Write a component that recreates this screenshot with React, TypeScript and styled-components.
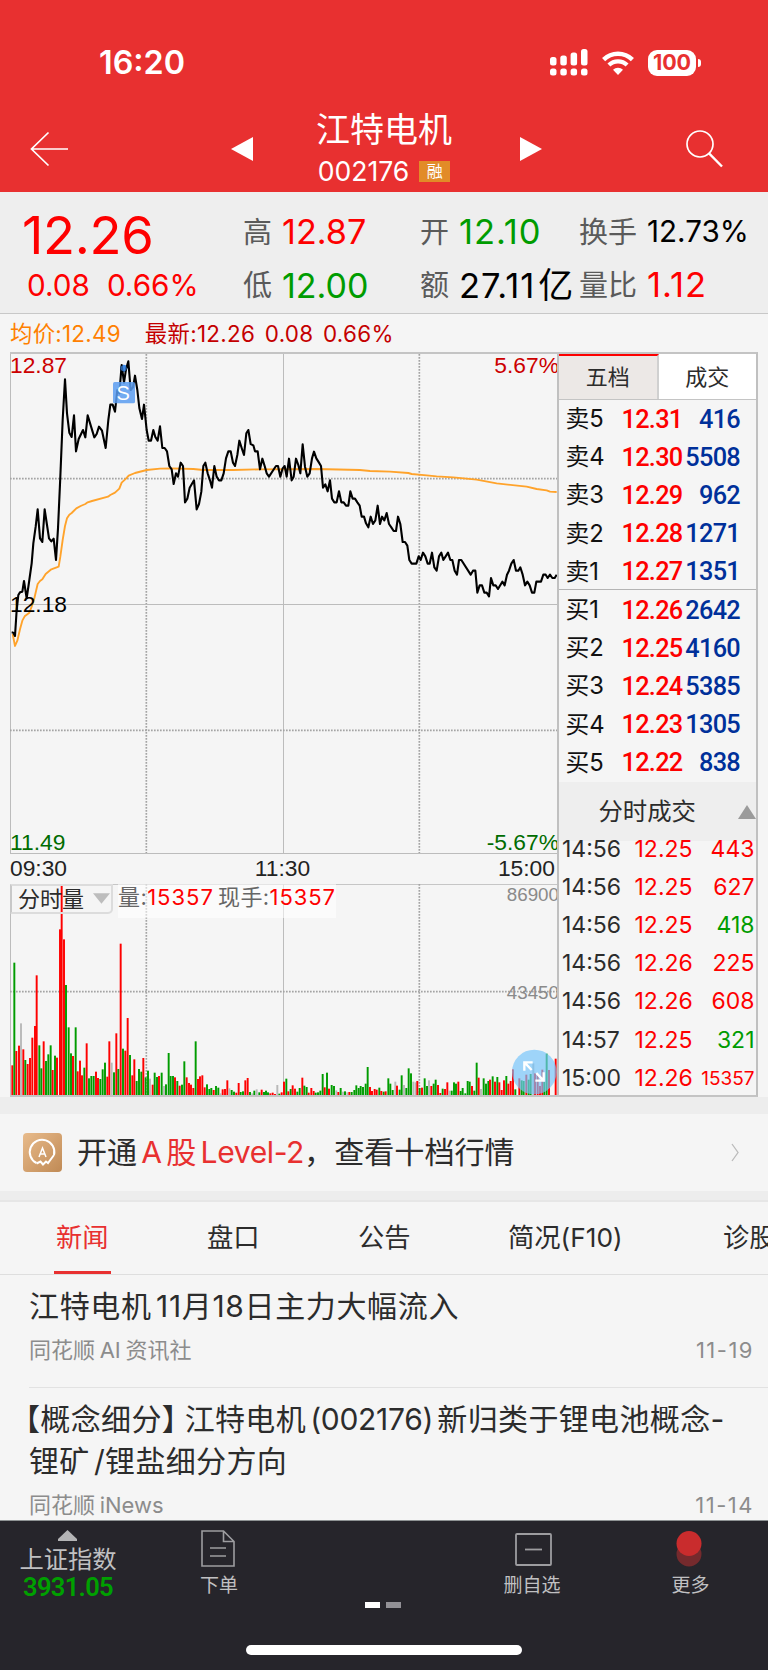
import React from 'react';
import styled, { createGlobalStyle } from 'styled-components';

const RED = '#fe0000';
const GREEN = '#009c00';
const BLUE = '#00309a';

const Global = createGlobalStyle`
  * { box-sizing: border-box; }
  html, body { margin: 0; padding: 0; background: #f5f5f5; }
  body {
    width: 768px;
    font-family: Inter, 'Noto Sans CJK SC', sans-serif;
    color: #2c2c2c;
    line-height: 1;
    overflow: hidden;
  }
`;

const Screen = styled.div`
  width: 768px;
  height: 1670px;
  display: flex;
  flex-direction: column;
  background: #f5f5f5;
  overflow: hidden;
`;

const Txt = styled.span<{ $s: number; $c?: string; $w?: number; $ls?: number; $ws?: number }>`
  font-size: ${p => p.$s}px;
  line-height: 1;
  color: ${p => p.$c ?? 'inherit'};
  font-weight: ${p => p.$w ?? 400};
  letter-spacing: ${p => p.$ls ?? 0}px;
  word-spacing: ${p => p.$ws ?? 0}px;
  white-space: pre;
`;

/* ---------- header ---------- */
const Header = styled.header`
  flex: none;
  height: 192px;
  background: #e83030;
  color: #fff;
  display: flex;
  flex-direction: column;
`;
const StatusBar = styled.div`
  height: 108px;
  padding: 47px 67px 0 99px;
  display: flex;
  justify-content: space-between;
  align-items: flex-start;
`;
const StatusIcons = styled.div`
  display: flex;
  align-items: center;
  gap: 14px;
  height: 31px;
`;
const Battery = styled.div`
  display: flex;
  align-items: center;
  gap: 2px;
`;
const BatteryBody = styled.div`
  width: 48px;
  height: 26px;
  border-radius: 9px;
  background: #fff;
  display: flex;
  align-items: center;
  justify-content: center;
`;
const BatteryTip = styled.div`
  width: 3px;
  height: 8px;
  border-radius: 0 3px 3px 0;
  background: #fff;
`;
const NavBar = styled.div`
  height: 84px;
  padding: 0 45px 2px 30px;
  display: flex;
  align-items: center;
  justify-content: space-between;
`;
const NavCenter = styled.div`
  display: flex;
  align-items: center;
  justify-content: space-between;
  width: 311px;
  margin-left: 18px;
`;
const Title = styled.div`
  display: flex;
  flex-direction: column;
  align-items: center;
  gap: 11px;
  margin: -1px 5px 0 0;
`;
const CodeRow = styled.div`
  display: flex;
  align-items: center;
  gap: 10px;
`;
const Badge = styled.span`
  width: 31px;
  height: 21px;
  background: #e28b27;
  font-size: 16px;
  line-height: 20px;
  text-align: center;
`;

/* ---------- quote ---------- */
const Quote = styled.section`
  flex: none;
  height: 122px;
  background: #eeeeee;
  border-bottom: 1px solid #c8c8c8;
  display: grid;
  grid-template-columns: 243px 177px 159px 1fr;
  padding-top: 13px;
`;
const QuoteCol = styled.div`
  display: grid;
  grid-template-rows: 54px 53px;
`;
const QuoteCell = styled.div<{ $gap?: number; $pl?: number; $pt?: number }>`
  display: flex;
  align-items: center;
  gap: ${p => p.$gap ?? 10}px;
  padding-left: ${p => p.$pl ?? 0}px;
  padding-top: ${p => p.$pt ?? 0}px;
  white-space: nowrap;
`;
const Amount = styled.span`
  font-size: 34.5px;
  letter-spacing: 1px;
  color: #000;
  small { font-size: 35px; margin-left: 3px; letter-spacing: 0; }
`;
const InfoLine = styled.div`
  flex: none;
  height: 38px;
  display: flex;
  align-items: center;
  padding: 2px 0 0 10px;
  gap: 24px;
`;

/* ---------- chart ---------- */
const Market = styled.section`
  flex: none;
  display: flex;
  height: 745px;
  margin-left: 10px;
  width: 748px;
  border-top: 2px solid #c4c4c4;
  border-bottom: 2px solid #c4c4c4;
  border-right: 2px solid #c0c0c0;
`;
const ChartCol = styled.div`
  width: 548px;
  display: flex;
  flex-direction: column;
`;
const Plot = styled.div<{ $h: number }>`
  position: relative;
  flex: none;
  height: ${p => p.$h}px;
  svg { display: block; }
`;
const Tag = styled.span<{ $x?: number; $r?: number; $y: number; $c: string; $s?: number }>`
  position: absolute;
  top: ${p => p.$y}px;
  ${p => (p.$r !== undefined ? `right: ${p.$r}px;` : `left: ${p.$x}px;`)}
  color: ${p => p.$c};
  font: ${p => p.$s ?? 22.8}px/24px 'Liberation Sans', Arial, sans-serif;
`;
const TimeAxis = styled.div`
  height: 30px;
  flex: none;
  display: flex;
  justify-content: space-between;
  padding-right: 3px;
  font: 22.8px/28px 'Liberation Sans', Arial, sans-serif;
  color: #222;
`;
const Indicator = styled.div`
  position: absolute;
  left: 0;
  top: 0;
  display: flex;
  gap: 5px;
`;
const Select = styled.div`
  width: 103px;
  height: 30px;
  border: 2px solid #dcdcdc;
  border-left-color: #c8c8c8;
  border-radius: 0 0 5px 0;
  display: flex;
  align-items: center;
  padding: 0 1px 1px 6px;
  gap: 9px;
  svg { margin-top: 0; }
`;
const Reading = styled.div`
  height: 34px;
  width: 218px;
  background: rgba(255, 255, 255, 0.55);
  display: flex;
  align-items: flex-start;
  padding-top: 2px;
`;

/* ---------- order book ---------- */
const Book = styled.aside`
  width: 199px;
  margin-left: -1px;
  position: relative;
  border-left: 2px solid #c0c0c0;
  display: flex;
  flex-direction: column;
  > * { flex: none; }
`;
const BookTabs = styled.div`
  display: flex;
  height: 46px;
  border-bottom: 1px solid #c4c4c4;
`;
const BookTab = styled.div<{ $on?: boolean }>`
  flex: 1;
  display: flex;
  align-items: center;
  justify-content: center;
  padding-bottom: 2px;
  background: ${p => (p.$on ? '#ece8e6' : '#fff')};
  border-top: 2px solid ${p => (p.$on ? '#fe0000' : '#fff')};
  border-right: ${p => (p.$on ? '2px solid #d0d0d0' : '0')};
  font-size: 22px;
`;
const Levels = styled.div<{ $line?: boolean }>`
  height: ${p => (p.$line ? 190 : 192)}px;
  padding-top: ${p => (p.$line ? 0 : 1)}px;
  border-bottom: ${p => (p.$line ? '1px solid #b4b4b4' : '0')};
`;
const Level = styled.div`
  height: 38.15px;
  display: grid;
  grid-template-columns: 56px 61px 57.5px;
  align-items: center;
  padding-left: 6.5px;
`;
const LevelName = styled.span`
  font-size: 23.8px;
  color: #111;
  white-space: nowrap;
`;
const LevelNum = styled.span<{ $right?: boolean }>`
  font: 500 25.3px/1 Roboto, sans-serif;
  letter-spacing: -0.7px;
  padding-top: 1px;
  color: ${p => (p.$right ? BLUE : RED)};
  text-align: ${p => (p.$right ? 'right' : 'left')};
`;
const TradesHead = styled.div`
  height: 59px;
  background: #eeeeee;
  display: flex;
  align-items: center;
  justify-content: flex-end;
  gap: 42px;
`;
const Trades = styled.div`
  position: relative;
  margin-top: -11px;
`;
const Trade = styled.div`
  height: 38.2px;
  display: flex;
  align-items: center;
  padding: 0 2px 0 3px;
`;
const TradeCell = styled.span<{ $w: number; $c?: string; $s?: number; $end?: boolean }>`
  flex: none;
  width: ${p => p.$w}px;
  font-size: ${p => p.$s ?? 23}px;
  color: ${p => p.$c ?? '#2c2c2c'};
  text-align: ${p => (p.$end ? 'right' : 'left')};
  white-space: nowrap;
`;

/* ---------- promo, tabs, news ---------- */
const Band = styled.div<{ $h: number }>`
  flex: none;
  height: ${p => p.$h}px;
  background: #ededed;
`;
const Promo = styled.div`
  flex: none;
  height: 77px;
  display: flex;
  align-items: center;
  padding: 0 29px 0 23px;
`;
const PromoText = styled.div`
  flex: 1;
  margin-left: 15px;
  font-size: 30.1px;
  white-space: pre;
  word-spacing: -4.3px;
  em { font-style: normal; color: #e83030; }
  b { font-weight: 400; letter-spacing: -0.4px; }
`;
const Tabs = styled.nav`
  flex: none;
  height: 75px;
  border-top: 2px solid #e6e6e6;
  border-bottom: 1px solid #dedede;
  display: flex;
  padding-left: 53.5px;
  overflow: hidden;
`;
const Tab = styled.div<{ $on?: boolean; $w: number }>`
  flex: none;
  width: ${p => p.$w}px;
  font-size: 26.3px;
  color: ${p => (p.$on ? '#e83030' : '#2c2c2c')};
  span {
    display: inline-flex;
    align-items: center;
    height: 73px;
    padding: 4px 2.5px 0;
    border-bottom: ${p => (p.$on ? '4px solid #e83030' : '4px solid transparent')};
  }
`;
const Article = styled.article<{ $h: number; $line?: boolean }>`
  flex: none;
  height: ${p => p.$h}px;
  margin-left: 29px;
  padding: 10px 15px 0 0;
  border-bottom: ${p => (p.$line ? '1px solid #e2e2e2' : '0')};
`;
const Headline = styled.h2<{ $ls: number }>`
  margin: 0;
  font-size: 30px;
  line-height: 42px;
  font-weight: 400;
  letter-spacing: ${p => p.$ls}px;
  word-spacing: -4.6px;
  white-space: pre;
  b { font-weight: 400; letter-spacing: -0.3px; }
`;
const Bracket = styled.span<{ $l: number; $r: number }>`
  font-feature-settings: 'halt' 1;
  margin: 0 ${p => p.$r}px 0 ${p => p.$l}px;
`;
const Meta = styled.div`
  display: flex;
  justify-content: space-between;
  font-size: 22px;
  line-height: 30px;
  margin-top: 7.5px;
  word-spacing: -1.5px;
  color: #8c8c8c;
  span:last-child { letter-spacing: 1.5px; margin-right: -1px; }
`;

/* ---------- footer ---------- */
const Footer = styled.footer`
  flex: none;
  height: 150px;
  background: #26252b;
  border-top: 1px solid #8e9394;
  color: #c0c0c2;
  display: flex;
  flex-direction: column;
  align-items: center;
`;
const FootRow = styled.div`
  width: 768px;
  height: 81px;
  display: grid;
  grid-template-columns: 136px 166px 161px 138px 167px;
`;
const FootItem = styled.div<{ $pt: number; $gap: number; $shift?: number; $pl?: number }>`
  display: flex;
  flex-direction: column;
  align-items: center;
  padding-top: ${p => p.$pt}px;
  padding-left: ${p => p.$pl ?? 0}px;
  gap: ${p => p.$gap}px;
  svg { flex: none; margin-right: ${p => p.$shift ?? 0}px; }
`;
const IndexValue = styled.span`
  font: 600 25.5px/24px Roboto, sans-serif;
  letter-spacing: -0.7px;
  margin-top: -2px;
  color: #00a000;
`;
const Pager = styled.div`
  display: flex;
  gap: 6px;
  margin-right: 2px;
`;
const Dash = styled.i<{ $on?: boolean }>`
  width: 15px;
  height: 6px;
  background: ${p => (p.$on ? '#fff' : '#929196')};
`;
const HomeBar = styled.div`
  width: 276px;
  height: 10px;
  margin-top: 37px;
  border-radius: 5px;
  background: #fff;
`;

const PRICE =
  '35,847 40,848 45,858 50,780 55,735 60,727 67,725 72,693 80,745 88,690 95,640 100,580 107,530 113,478 120,565 127,576 134,478 141,525 147,565 154,574 161,566 168,630 174,535 181,380 188,210 195,88 201,190 208,248 215,261 222,196 228,304 236,267 249,240 256,262 263,196 283,262 290,252 297,230 306,242 317,294 325,210 331,164 338,164 345,185 352,120 358,130 365,45 372,98 378,58 385,34 392,120 399,112 405,77 412,120 418,174 426,207 432,164 440,240 446,272 453,272 460,240 466,261 473,272 480,229 487,294 494,294 501,304 508,348 515,358 521,402 528,370 534,380 542,338 549,348 555,457 562,446 569,413 582,391 590,478 597,462 604,425 610,348 616,338 623,370 630,391 636,413 643,348 650,380 657,391 664,391 671,370 678,325 685,304 692,304 699,338 705,348 712,315 718,272 725,294 732,315 739,250 745,240 752,282 760,286 765,304 773,304 780,358 787,326 794,348 800,370 807,380 820,360 828,348 834,348 841,380 848,355 854,348 860,380 867,326 875,391 881,380 888,326 895,345 901,370 908,283 915,350 922,380 929,370 936,325 942,305 949,325 957,338 963,348 969,413 976,403 983,424 990,391 996,446 1003,457 1010,457 1017,424 1024,457 1031,457 1038,467 1045,467 1051,424 1058,446 1065,446 1072,457 1079,467 1085,500 1092,500 1098,520 1105,532 1112,500 1119,522 1126,511 1133,467 1140,522 1146,500 1153,511 1160,489 1167,522 1174,532 1181,543 1188,543 1194,500 1201,522 1208,576 1215,576 1222,587 1228,630 1235,641 1249,641 1256,619 1262,630 1269,608 1276,619 1283,641 1289,641 1296,608 1303,652 1310,662 1317,619 1324,608 1330,630 1337,619 1344,608 1351,630 1357,630 1364,662 1371,674 1377,630 1384,630 1412,674 1419,662 1426,662 1432,728 1439,706 1446,706 1453,728 1460,728 1467,739 1473,684 1480,706 1487,706 1494,717 1507,695 1514,706 1521,674 1527,662 1534,641 1541,630 1548,662 1555,662 1561,652 1568,674 1575,706 1582,695 1589,706 1596,728 1603,728 1609,695 1623,695 1630,674 1637,674 1643,684 1650,674 1657,684 1664,684 1670,674';

const AVERAGE =
  '38,852 45,888 52,872 60,838 67,812 74,799 88,788 95,770 103,745 113,702 120,693 127,688 137,672 154,658 176,650 181,620 188,570 195,528 201,505 208,494 215,489 229,475 242,468 256,462 263,457 276,453 324,440 331,435 345,428 358,416 365,398 378,386 386,377 405,369 440,360 480,356 515,355 580,357 610,360 700,360 780,358 950,357 1080,360 1110,363 1170,365 1225,369 1235,372 1280,376 1310,379 1360,382 1430,389 1490,400 1580,410 1610,417 1640,421 1650,425 1670,426';

// One bar per minute: R up, G down, N flat, then x:top
const VOLUME =
  'R37:676 G43:368 R49:633 R57:617 N63:550 R70:628 G76:660 R83:672 R90:654 R97:593 R105:558 R110:406 G118:616 G124:685 R131:604 G138:663 G145:643 G152:616 R158:690 G165:647 R171:653 R180:268 R185:136 R192:298 G198:435 G206:562 G213:640 R219:648 G227:562 R233:694 R240:662 R246:706 G253:683 R260:610 G267:715 G274:708 G281:708 R288:695 R294:714 G301:717 G308:688 G315:668 R322:710 R328:604 N335:668 G342:697 R349:580 G355:687 R362:311 G369:626 R376:632 R383:534 G390:645 R397:706 R403:658 G410:723 G417:687 G424:695 R430:654 G437:712 G444:692 N450:716 R458:734 G464:698 G471:711 R477:708 G485:698 N492:738 G498:733 G506:639 G512:708 G519:708 R525:712 G532:723 R539:737 G546:734 G553:664 R560:712 R567:729 R573:734 R580:744 G587:604 R594:717 R600:709 R607:706 R614:742 G621:733 G628:747 G634:744 R641:750 G648:738 G655:743 N661:760 R668:748 R675:747 R682:721 N688:745 G695:750 G702:755 R709:758 R716:729 G722:756 G729:754 R736:721 R743:714 G750:756 N757:760 G763:752 N770:748 G778:757 R785:749 G792:756 G798:752 G804:757 R811:760 R818:758 R825:762 N832:735 G838:761 R845:757 R852:725 G859:716 R865:754 G872:747 R878:736 R885:746 G892:755 G899:744 R907:713 G913:737 G920:741 R926:758 R934:744 R941:753 G947:758 G954:757 G961:752 G968:702 R974:742 G981:698 R987:746 G995:735 G1002:738 N1009:751 R1015:756 G1022:744 N1029:755 G1035:754 N1042:757 R1048:756 G1055:756 G1063:750 G1069:736 G1076:744 G1082:738 G1089:741 G1097:731 G1103:681 R1110:741 R1116:753 R1124:747 R1130:749 G1138:743 R1144:753 G1151:755 R1157:754 G1165:715 G1171:731 G1178:750 N1186:725 R1191:737 G1199:749 G1205:706 N1212:735 G1219:744 G1226:685 G1233:700 N1240:725 N1247:727 R1252:723 G1259:744 R1266:743 G1274:715 G1281:738 N1287:721 R1294:738 G1301:731 G1307:719 R1314:735 R1321:759 G1328:746 R1335:747 R1342:727 N1348:752 G1355:752 G1362:727 G1368:731 R1375:725 G1382:753 G1388:744 G1396:760 G1403:723 G1409:725 R1416:738 G1423:752 G1430:668 R1436:713 N1443:747 G1451:715 G1458:731 G1465:723 R1470:719 G1478:709 R1485:725 G1492:711 R1498:727 R1505:750 R1512:721 G1519:708 R1525:731 R1532:723 R1539:688 G1546:748 R1558:715 G1565:721 G1571:723 R1579:704 G1586:719 G1592:702 N1600:670 R1605:700 R1613:705 R1620:738 R1627:689 G1633:725 G1640:641 R1647:690 G1654:765 R1667:656';

const bars = VOLUME.split(' ').map(v => {
  const [x, top] = v.slice(1).split(':').map(Number);
  return { x, top, fill: v[0] === 'R' ? RED : v[0] === 'G' ? GREEN : '#b9b9b9' };
});

function Grid({ top, bottom, mid }: { top: number; bottom: number; mid: number }) {
  return (
    <g stroke="#a4a4a4" strokeWidth="3" fill="none">
      <path d={`M31.5 ${top}V${bottom}M850.5 ${top}V${bottom}`} stroke="#bcbcbc" />
      <path d={`M439 ${top}V${bottom}M1258 ${top}V${bottom}M30 ${mid}H1677`} strokeDasharray="5 4" strokeWidth="5" />
    </g>
  );
}

function PriceChart() {
  return (
    <Plot $h={500}>
      <svg width="549" height="500" viewBox="30 12 1647 1500" fill="none">
        <Grid top={12} bottom={1512} mid={386} />
        <path d="M30 1141H1677" stroke="#a4a4a4" strokeWidth="5" strokeDasharray="5 4" />
        <path d="M30 763.5H1677M30 1510.5H1677" stroke="#bcbcbc" strokeWidth="3" />
        <circle cx="371" cy="55" r="11" fill="#3f8bea" />
        <polyline points={AVERAGE} stroke="#ffa32b" strokeWidth="5.6" strokeLinejoin="round" />
        <polyline points={PRICE} stroke="#000" strokeWidth="6.3" strokeLinejoin="round" />
        <rect x="339" y="96" width="66" height="64" rx="5" fill="#5a9cf0" fillOpacity="0.85" />
        <circle cx="371" cy="55" r="9" fill="#3f8bea" fillOpacity="0.7" />
      </svg>
      <Tag $x={0} $y={-1} $c="#cc0000">12.87</Tag>
      <Tag $r={-1} $y={-1} $c="#cc0000">5.67%</Tag>
      <Tag $x={0} $y={238} $c="#000">12.18</Tag>
      <Tag $x={0} $y={476} $c="#006c00">11.49</Tag>
      <Tag $r={-1} $y={476} $c="#006c00">-5.67%</Tag>
      <Tag $x={106.5} $y={27} $c="#fff" $s={20}>S</Tag>
    </Plot>
  );
}

function VolumeChart() {
  return (
    <Plot $h={211}>
      <svg width="549" height="211" viewBox="30 132 1647 633" fill="none">
        <path d="M30 133H1677" stroke="#bcbcbc" strokeWidth="3" />
        <Grid top={132} bottom={768} mid={455} />
        {bars.map((b, i) => (
          <rect key={i} x={b.x - 2.9} y={b.top} width="5.8" height={768 - b.top} fill={b.fill} />
        ))}
        <circle cx="1603" cy="696" r="67" fill="#74c4fb" fillOpacity="0.68" />
        <g stroke="#fff" strokeWidth="7">
          <path d="M1573 692V667H1598M1574 668L1595 690M1606 722H1631V697M1630 721L1609 699" />
        </g>
      </svg>
      <Tag $r={-1} $y={-1} $c="#8a8a8a" $s={18.8}>86900</Tag>
      <Tag $r={-1} $y={97} $c="#8a8a8a" $s={18.8}>43450</Tag>
      <Indicator>
        <Select>
          <Txt $s={22}>分时量</Txt>
          <svg width="18" height="11" viewBox="0 0 18 11"><path d="M0 0H18L9 11Z" fill="#bdbdbd" /></svg>
        </Select>
        <Reading>
          <Txt $s={22} $c="#666" $ls={0.4}>量:</Txt>
          <Txt $s={22} $c={RED} $ls={1}>15357</Txt>
          <Txt $s={22} $c="#666" $ls={0.4} $ws={-2.5}> 现手:</Txt>
          <Txt $s={22} $c={RED} $ls={0.9}>15357</Txt>
        </Reading>
      </Indicator>
    </Plot>
  );
}

const asks = [['卖5', '12.31', '416'], ['卖4', '12.30', '5508'], ['卖3', '12.29', '962'], ['卖2', '12.28', '1271'], ['卖1', '12.27', '1351']];
const bids = [['买1', '12.26', '2642'], ['买2', '12.25', '4160'], ['买3', '12.24', '5385'], ['买4', '12.23', '1305'], ['买5', '12.22', '838']];
const trades: [string, string, string, string][] = [
  ['14:56', '12.25', '443', RED],
  ['14:56', '12.25', '627', RED],
  ['14:56', '12.25', '418', GREEN],
  ['14:56', '12.26', '225', RED],
  ['14:56', '12.26', '608', RED],
  ['14:57', '12.25', '321', GREEN],
  ['15:00', '12.26', '15357', RED],
];

const LevelRow = ({ row }: { row: string[] }) => (
  <Level>
    <LevelName>{row[0]}</LevelName>
    <LevelNum>{row[1]}</LevelNum>
    <LevelNum $right>{row[2]}</LevelNum>
  </Level>
);

function OrderBook() {
  return (
    <Book>
      <BookTabs>
        <BookTab $on>五档</BookTab>
        <BookTab>成交</BookTab>
      </BookTabs>
      <Levels $line>{asks.map(r => <LevelRow key={r[0]} row={r} />)}</Levels>
      <Levels>{bids.map(r => <LevelRow key={r[0]} row={r} />)}</Levels>
      <TradesHead>
        <Txt $s={24.4}>分时成交</Txt>
        <svg width="18" height="14" viewBox="0 0 18 14"><path d="M9 0L18 14H0Z" fill="#9b9b9b" /></svg>
      </TradesHead>
      <Trades>
        {trades.map((t, i) => (
          <Trade key={i}>
            <TradeCell $w={72.5}>{t[0]}</TradeCell>
            <TradeCell $w={60} $c={RED}>{t[1]}</TradeCell>
            <TradeCell $w={60} $c={t[3]} $s={t[2].length > 4 ? 19 : 23} $end>{t[2]}</TradeCell>
          </Trade>
        ))}
      </Trades>
    </Book>
  );
}

function StatusRow() {
  return (
    <StatusBar>
      <Txt $s={32.3} $w={600}>16:20</Txt>
      <StatusIcons>
        <svg width="38" height="27" viewBox="0 0 38 27" fill="#fff">
          <rect x="0" y="8" width="6.5" height="8.5" rx="2.5" />
          <rect x="10.3" y="6.5" width="6.5" height="10" rx="2.5" />
          <rect x="20.6" y="3.5" width="6.5" height="13" rx="2.5" />
          <rect x="31" y="0" width="6.5" height="16.5" rx="2.5" />
          {[0, 10.3, 20.6, 31].map(x => <rect key={x} x={x} y="19.5" width="6.5" height="7" rx="2.5" />)}
        </svg>
        <svg width="32" height="24" viewBox="0 0 32 24" fill="none" stroke="#fff">
          <path d="M1.6 8.6A20.5 20.5 0 0 1 30.4 8.6" strokeWidth="4.4" />
          <path d="M6.9 14A13 13 0 0 1 25.1 14" strokeWidth="4.2" />
          <path d="M16 24L11 18.7A7.2 7.2 0 0 1 21 18.7Z" fill="#fff" stroke="none" />
        </svg>
        <Battery>
          <BatteryBody><Txt $s={21.5} $w={700} $c="#e83030" $ls={-0.1}>100</Txt></BatteryBody>
          <BatteryTip />
        </Battery>
      </StatusIcons>
    </StatusBar>
  );
}

export default function App() {
  return (
    <Screen>
      <Global />
      <Header>
        <StatusRow />
        <NavBar>
          <svg width="39" height="36" viewBox="0 0 39 36" fill="none" stroke="#fff" strokeWidth="1.7">
            <path d="M18.5 1.5L1.5 18L18.5 34.5M1.5 18H38" />
          </svg>
          <NavCenter>
            <svg width="22" height="26" viewBox="0 0 22 26"><path d="M22 1V25L0 13Z" fill="#fff" /></svg>
            <Title>
              <Txt $s={34}>江特电机</Txt>
              <CodeRow>
                <Txt $s={26.6}>002176</Txt>
                <Badge>融</Badge>
              </CodeRow>
            </Title>
            <svg width="22" height="26" viewBox="0 0 22 26"><path d="M0 1V25L22 13Z" fill="#fff" /></svg>
          </NavCenter>
          <svg width="37" height="38" viewBox="0 0 37 38" fill="none" stroke="#fff" strokeWidth="1.7">
            <circle cx="14" cy="14" r="13" />
            <path d="M22.8 23.2L36 36.5" strokeWidth="2.4" />
          </svg>
        </NavBar>
      </Header>

      <Quote>
        <QuoteCol>
          <QuoteCell $pl={22} $pt={7}><Txt $s={52.5} $c={RED} $ls={-0.3}>12.26</Txt></QuoteCell>
          <QuoteCell $pl={27} $gap={17}>
            <Txt $s={29.7} $c={RED}>0.08</Txt>
            <Txt $s={29.7} $c={RED}>0.66%</Txt>
          </QuoteCell>
        </QuoteCol>
        <QuoteCol>
          <QuoteCell><Txt $s={29} $c="#5a5a5a">高</Txt><Txt $s={34.2} $c={RED}>12.87</Txt></QuoteCell>
          <QuoteCell><Txt $s={29} $c="#5a5a5a">低</Txt><Txt $s={34} $c={GREEN}>12.00</Txt></QuoteCell>
        </QuoteCol>
        <QuoteCol>
          <QuoteCell><Txt $s={29} $c="#5a5a5a">开</Txt><Txt $s={34.5} $c={GREEN} $ls={0.9}>12.10</Txt></QuoteCell>
          <QuoteCell><Txt $s={29} $c="#5a5a5a">额</Txt><Amount>27.11<small>亿</small></Amount></QuoteCell>
        </QuoteCol>
        <QuoteCol>
          <QuoteCell><Txt $s={29} $c="#5a5a5a">换手</Txt><Txt $s={29.6} $c="#000">12.73%</Txt></QuoteCell>
          <QuoteCell><Txt $s={29} $c="#5a5a5a">量比</Txt><Txt $s={34.5} $c={RED} $ls={1}>1.12</Txt></QuoteCell>
        </QuoteCol>
      </Quote>
      <InfoLine>
        <Txt $s={22.4} $c="#ff8000" $ls={0.25}>均价:12.49</Txt>
        <Txt $s={22.4} $c="#c40000" $ls={0.3} $ws={-1.8}>最新:12.26  0.08  0.66%</Txt>
      </InfoLine>

      <Market>
        <ChartCol>
          <PriceChart />
          <TimeAxis><span>09:30</span><span>11:30</span><span>15:00</span></TimeAxis>
          <VolumeChart />
        </ChartCol>
        <OrderBook />
      </Market>
      <Band $h={17} />

      <Promo>
        <svg width="39" height="39" viewBox="0 0 39 39" fill="none">
          <defs>
            <linearGradient id="gold" x1="0" y1="0" x2="1" y2="1">
              <stop offset="0" stopColor="#e8bb8b" /><stop offset="1" stopColor="#c08a55" />
            </linearGradient>
          </defs>
          <rect width="39" height="39" rx="4" fill="url(#gold)" />
          <path d="M13.5 30A12.3 12.3 0 1 1 31 22" stroke="#fff" strokeWidth="2" />
          <path d="M13.5 30.5L17.5 28.5L20 31.5L23 28.5L25 30L31 22" stroke="#fff" strokeWidth="2" />
          <path d="M16 24L19.5 15L23 24M17.2 21H21.8" stroke="#fff" strokeWidth="1.5" />
        </svg>
        <PromoText>开通 <em>A 股 <b>Level-2</b></em>，查看十档行情</PromoText>
        <svg width="8" height="19" viewBox="0 0 8 19" fill="none" stroke="#bbb" strokeWidth="1.3">
          <path d="M1 1L7 9.5L1 18" />
        </svg>
      </Promo>
      <Band $h={9} />

      <Tabs>
        <Tab $on $w={151}><span>新闻</span></Tab>
        <Tab $w={151}><span>盘口</span></Tab>
        <Tab $w={150}><span>公告</span></Tab>
        <Tab $w={215}><span>简况(F10)</span></Tab>
        <Tab $w={60}><span>诊股</span></Tab>
      </Tabs>

      <Article $h={113} $line>
        <Headline $ls={0.65}>江特电机 11月18日主力大幅流入</Headline>
        <Meta><span>同花顺 AI 资讯社</span><span>11-19</span></Meta>
      </Article>
      <Article $h={132}>
        <Headline $ls={0.35}>
          <Bracket $l={-4} $r={0}>【</Bracket>概念细分<Bracket $l={0} $r={7.5}>】</Bracket>
          江特电机 <b>(002176)</b> 新归类于锂电池概念-{'\n'}锂矿 /锂盐细分方向
        </Headline>
        <Meta><span>同花顺 iNews</span><span>11-14</span></Meta>
      </Article>

      <Footer>
        <FootRow>
          <FootItem $pt={9} $gap={6} $shift={1}>
            <svg width="19" height="11" viewBox="0 0 19 11"><path d="M9.5 0L19 9V11H0V9Z" fill="#b4b4b6" /></svg>
            <Txt $s={24.3}>上证指数</Txt>
            <IndexValue>3931.05</IndexValue>
          </FootItem>
          <FootItem $pt={9} $gap={9} $shift={3}>
            <svg width="34" height="37" viewBox="0 0 34 37" fill="none" stroke="#9d9da0" strokeWidth="1.6">
              <path d="M1 1H22.5L33 11.5V36H1ZM22.5 1V11.5H33M9 18H25M9 26H25" />
            </svg>
            <Txt $s={19}>下单</Txt>
          </FootItem>
          <div />
          <FootItem $pt={12} $gap={10} $shift={-3}>
            <svg width="38" height="33" viewBox="0 0 38 33" fill="none" stroke="#9d9da0" strokeWidth="1.8">
              <rect x="1" y="1" width="35" height="31" rx="1" /><path d="M10 16.5H27" />
            </svg>
            <Txt $s={19}>删自选</Txt>
          </FootItem>
          <FootItem $pt={10} $gap={9} $shift={3} $pl={12}>
            <svg width="26" height="36" viewBox="0 0 26 36">
              <circle cx="13" cy="23" r="12.5" fill="#752a2d" />
              <circle cx="13" cy="12.5" r="12.5" fill="#c92c2d" />
            </svg>
            <Txt $s={19}>更多</Txt>
          </FootItem>
        </FootRow>
        <Pager><Dash $on /><Dash /></Pager>
        <HomeBar />
      </Footer>
    </Screen>
  );
}
